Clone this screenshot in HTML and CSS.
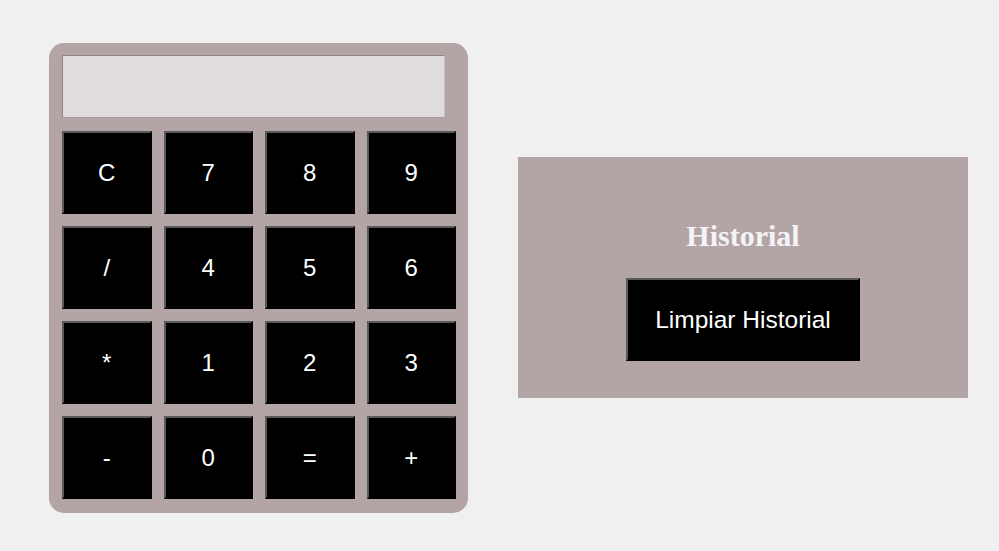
FILE: index.html
```html
<!DOCTYPE html>
<html lang="es">
<head>
<meta charset="utf-8">
<title>Calculadora</title>
<link rel="stylesheet" href="styles.css">
</head>
<body>
<main class="page">
  <section class="calculator">
    <div class="display"></div>
    <div class="keys">
      <button class="key">C</button>
      <button class="key">7</button>
      <button class="key">8</button>
      <button class="key">9</button>
      <button class="key">/</button>
      <button class="key">4</button>
      <button class="key">5</button>
      <button class="key">6</button>
      <button class="key">*</button>
      <button class="key">1</button>
      <button class="key">2</button>
      <button class="key">3</button>
      <button class="key">-</button>
      <button class="key">0</button>
      <button class="key">=</button>
      <button class="key">+</button>
    </div>
  </section>
  <section class="history">
    <h2 class="history-title">Historial</h2>
    <button class="clear-btn">Limpiar Historial</button>
  </section>
</main>
</body>
</html>
```
FILE: styles.css
```css
html, body {
  margin: 0;
  padding: 0;
  background: #f0f0f0;
}

.page {
  display: flex;
  align-items: flex-start;
  gap: 50px;
  padding: 43px 0 0 49px;
}

.calculator {
  box-sizing: border-box;
  width: 419px;
  height: 470px;
  padding: 12px 12px 14px 13px;
  background: #b3a5a5;
  border-radius: 15px;
  display: flex;
  flex-direction: column;
  gap: 13px;
}

.display {
  box-sizing: border-box;
  width: 383px;
  height: 63px;
  background: #e0dcdd;
  border-top: 1px solid #8f8787;
  border-left: 1px solid #8f8787;
  border-right: 1px solid #c6bebe;
  border-bottom: 1px solid #a39a9a;
}

.keys {
  display: grid;
  grid-template-columns: repeat(4, 1fr);
  grid-auto-rows: 83px;
  gap: 12px;
  width: 394px;
}

.key, .clear-btn {
  box-sizing: border-box;
  margin: 0;
  padding: 0;
  background: #000;
  color: #fff;
  font-family: "Liberation Sans", Arial, sans-serif;
  font-size: 24px;
  border-top: 2px solid #5a5a5a;
  border-left: 2px solid #5a5a5a;
  border-right: 2px solid #000;
  border-bottom: 2px solid #000;
  cursor: pointer;
}

.history {
  box-sizing: border-box;
  width: 450px;
  height: 241px;
  margin-top: 114px;
  background: #b3a5a5;
  padding-top: 62px;
  display: flex;
  flex-direction: column;
  align-items: center;
}

.history-title {
  margin: 0 0 25px;
  font-family: "Liberation Serif", "Times New Roman", serif;
  font-weight: bold;
  font-size: 30px;
  line-height: 34px;
  color: #f4f4f6;
}

.clear-btn {
  width: 234px;
  height: 83px;
  font-size: 24.5px;
}
```
